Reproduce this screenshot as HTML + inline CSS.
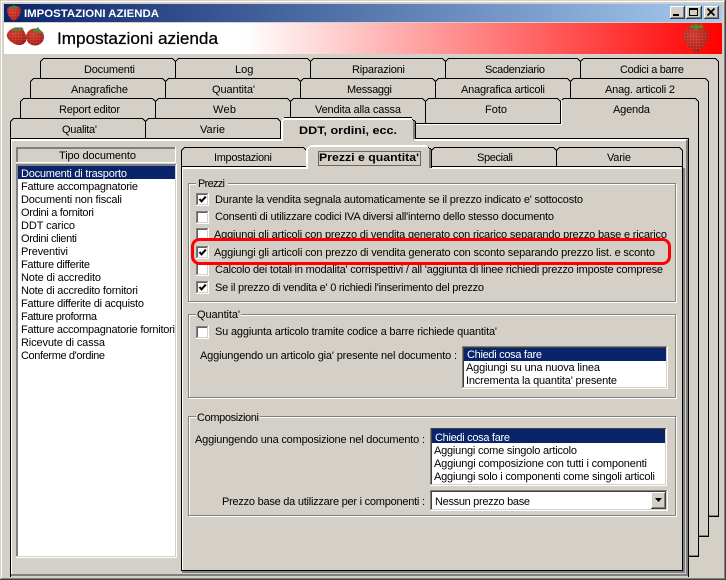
<!DOCTYPE html>
<html><head><meta charset="utf-8"><title>Impostazioni azienda</title>
<style>
html,body{margin:0;padding:0;background:#d4d0c8;width:726px;height:580px;overflow:hidden}
svg{display:block}
text{font-family:"Liberation Sans",Arial,sans-serif;font-size:11px;fill:#000}
.t path{fill:#d4d0c8;stroke:#000;stroke-width:1;shape-rendering:crispEdges}
.c{shape-rendering:crispEdges}
</style></head><body>
<svg width="726" height="580" viewBox="0 0 726 580" xmlns="http://www.w3.org/2000/svg">
<defs>
<linearGradient id="tb" x1="0" x2="1" y1="0" y2="0"><stop offset="0" stop-color="#0a246a"/><stop offset="1" stop-color="#a6caf0"/></linearGradient>
<linearGradient id="hd" gradientUnits="userSpaceOnUse" x1="245" x2="722" y1="0" y2="0"><stop offset="0" stop-color="#fff"/><stop offset="1" stop-color="#f00"/></linearGradient>
<radialGradient id="sb" cx=".4" cy=".35" r=".75"><stop offset="0" stop-color="#d8443a"/><stop offset=".7" stop-color="#b82a20"/><stop offset="1" stop-color="#8a1e16"/></radialGradient>
<pattern id="spk" width="3" height="3" patternUnits="userSpaceOnUse"><rect width="1" height="1" fill="#d86850" opacity=".5"/><rect x="1.500" y="1.500" width="1" height="1" fill="#701810" opacity=".55"/></pattern>
<g id="cb" class="c">
<rect width="13" height="13" fill="#fff"/>
<rect width="12" height="1" fill="#808080"/><rect width="1" height="12" fill="#808080"/>
<rect x="1" y="1" width="10" height="1" fill="#606060"/><rect x="1" y="1" width="1" height="10" fill="#606060"/>
<rect x="1" y="11" width="11" height="1" fill="#d4d0c8"/><rect x="11" y="1" width="1" height="11" fill="#d4d0c8"/>
</g>
<g id="cbk"><use href="#cb"/><path d="M3.500 6L5.500 8.400L9.800 3.600" fill="none" stroke="#000" stroke-width="2"/></g>
</defs>

<!-- window -->
<rect width="726" height="580" fill="#d4d0c8"/>
<g class="c">
<rect x="1" y="1" width="724" height="1" fill="#fff"/><rect x="1" y="1" width="1" height="578" fill="#fff"/>
<rect x="724" y="1" width="1" height="578" fill="#808080"/><rect x="1" y="578" width="724" height="1" fill="#808080"/>
<rect x="725" y="0" width="1" height="580" fill="#404040"/><rect x="0" y="579" width="726" height="1" fill="#404040"/>
<rect x="4" y="4" width="718" height="18" fill="url(#tb)"/>
<rect x="4" y="23" width="718" height="31" fill="url(#hd)"/>
</g>

<!-- title icon -->
<path d="M7 10C7 7 10 6 14 6C18 6 21 7 21 10C21 15 17 20 14 21C11 20 7 15 7 10Z" fill="url(#sb)"/>
<path d="M7 10C7 7 10 6 14 6C18 6 21 7 21 10C21 15 17 20 14 21C11 20 7 15 7 10Z" fill="url(#spk)"/>
<path d="M9 8L12 6.500L14 5L16 6.500L19 8L16 8.500L14 7.500L12 8.500Z" fill="#3f8a38"/>
<text x="24" y="17" font-weight="bold" style="fill:#fff" textLength="135" lengthAdjust="spacingAndGlyphs">IMPOSTAZIONI AZIENDA</text>

<!-- caption buttons -->
<g class="c">
<rect x="670" y="6" width="15" height="13" fill="#404040"/><rect x="670" y="6" width="14" height="12" fill="#fff"/><rect x="671" y="7" width="13" height="11" fill="#808080"/><rect x="671" y="7" width="12" height="10" fill="#d4d0c8"/>
<rect x="673" y="14" width="6" height="2" fill="#000"/>
<rect x="686" y="6" width="16" height="13" fill="#404040"/><rect x="686" y="6" width="15" height="12" fill="#fff"/><rect x="687" y="7" width="14" height="11" fill="#808080"/><rect x="687" y="7" width="13" height="10" fill="#d4d0c8"/>
<rect x="689.500" y="8.500" width="8" height="7" fill="none" stroke="#000"/><rect x="689" y="8" width="9" height="2" fill="#000"/>
<rect x="704" y="6" width="15" height="13" fill="#404040"/><rect x="704" y="6" width="14" height="12" fill="#fff"/><rect x="705" y="7" width="13" height="11" fill="#808080"/><rect x="705" y="7" width="12" height="10" fill="#d4d0c8"/>
</g>
<path d="M707.500 8.500L714.500 15.500M714.500 8.500L707.500 15.500" stroke="#000" stroke-width="1.800" fill="none"/>

<!-- header berries -->
<ellipse cx="35" cy="37" rx="9" ry="8.500" fill="url(#sb)"/><ellipse cx="35" cy="37" rx="9" ry="8.500" fill="url(#spk)"/>
<path d="M7 34C9 29 16 26 21 28C25 30 27 37 26 41C24 46 17 46 13 43C9 41 6 37 7 34Z" fill="url(#sb)"/>
<path d="M7 34C9 29 16 26 21 28C25 30 27 37 26 41C24 46 17 46 13 43C9 41 6 37 7 34Z" fill="url(#spk)"/>
<path d="M12 30L15 27L17 29L21 27L24 29L20 31L15 31ZM32 30L36 29L38 27L40 30L44 33L39 33L35 32Z" fill="#4d8a3a"/>
<text x="57" y="44" style="font-size:16.500px;stroke:#000;stroke-width:.25" textLength="161" lengthAdjust="spacingAndGlyphs">Impostazioni azienda</text>
<path d="M683 33C685 28 691 27 696 27C701 27 707 28 709 33C710 40 703 49 696 53C689 49 682 40 683 33Z" fill="url(#sb)"/>
<path d="M683 33C685 28 691 27 696 27C701 27 707 28 709 33C710 40 703 49 696 53C689 49 682 40 683 33Z" fill="url(#spk)"/>
<path d="M689 28L692 24L694 26L696 23L698 26L701 24L704 28L699 28L696 30L693 28Z" fill="#4f8a32"/>

<!-- ROW 1 -->
<g class="t">
<path d="M40.500 82V61.500L43.500 58.500H172.500L175.500 61.500V82"/>
<path d="M175.500 82V61.500L178.500 58.500H307.500L310.500 61.500V82"/>
<path d="M310.500 82V61.500L313.500 58.500H442.500L445.500 61.500V82"/>
<path d="M445.500 82V61.500L448.500 58.500H577.500L580.500 61.500V82"/>
<path d="M580.500 82V61.500L583.500 58.500H715.500L718.500 61.500V516.500H700V82"/>
</g>
<text x="84" y="73" textLength="51">Documenti</text>
<text x="235" y="73">Log</text>
<text x="352" y="73" textLength="53">Riparazioni</text>
<text x="485" y="73" textLength="60">Scadenziario</text>
<text x="620" y="73" textLength="64">Codici a barre</text>

<!-- ROW 2 -->
<g class="t">
<path d="M30.500 102V81.500L33.500 78.500H162.500L165.500 81.500V102"/>
<path d="M165.500 102V81.500L168.500 78.500H297.500L300.500 81.500V102"/>
<path d="M300.500 102V81.500L303.500 78.500H432.500L435.500 81.500V102"/>
<path d="M435.500 102V81.500L438.500 78.500H567.500L570.500 81.500V102"/>
<path d="M570.500 102V81.500L573.500 78.500H705.500L708.500 81.500V536.500H690V102"/>
</g>
<text x="71" y="93" textLength="57">Anagrafiche</text>
<text x="212" y="93" textLength="43">Quantita'</text>
<text x="347" y="93" textLength="45">Messaggi</text>
<text x="461" y="93" textLength="84">Anagrafica articoli</text>
<text x="605" y="93" textLength="70">Anag. articoli 2</text>

<!-- ROW 3 -->
<g class="t">
<path d="M20.500 123.500V101.500L23.500 98.500H152.500L155.500 101.500V123.500"/>
<path d="M155.500 123.500V101.500L158.500 98.500H287.500L290.500 101.500V123.500"/>
<path d="M290.500 123.500V101.500L293.500 98.500H422.500L425.500 101.500V123.500"/>
<path d="M425.500 123.500V101.500L428.500 98.500H557.500L560.500 101.500V123.500"/>
<path d="M560.500 123.500V101.500L563.500 98.500H695.500L698.500 101.500V556.500H680V150H560.500Z" style="stroke:none"/>
<path d="M560.500 123V101.500L563.500 98.500H695.500L698.500 101.500V556.500H688" style="fill:none"/>
</g>
<g class="c">
<rect x="415" y="123" width="146" height="1" fill="#000"/>
<rect x="415" y="124" width="147" height="1" fill="#fff"/>
<rect x="561" y="100" width="1" height="25" fill="#fff"/>
<rect x="689" y="555" width="9" height="1" fill="#808080"/>
<rect x="699" y="535" width="9" height="1" fill="#808080"/>
<rect x="709" y="515" width="9" height="1" fill="#808080"/>
</g>
<text x="59" y="113" textLength="61">Report editor</text>
<text x="213" y="113" textLength="23">Web</text>
<text x="315" y="113" textLength="86">Vendita alla cassa</text>
<text x="485" y="113">Foto</text>
<text x="613" y="113" textLength="37">Agenda</text>

<!-- ROW 4 inactive -->
<g class="t">
<path d="M10.500 143V121.500L13.500 118.500H142.500L145.500 121.500V143"/>
<path d="M145.500 143V121.500L148.500 118.500H277.500L280.500 121.500V143"/>
</g>

<!-- MAIN PANEL -->
<g class="c">
<rect x="10" y="138" width="679" height="439" fill="#d4d0c8"/>
<rect x="10" y="138" width="678" height="1" fill="#000"/>
<rect x="11" y="139" width="676" height="2" fill="#fff"/>
<rect x="10" y="138" width="1" height="439" fill="#000"/>
<rect x="11" y="139" width="1" height="436" fill="#fff"/>
<rect x="688" y="138" width="1" height="439" fill="#000"/>
<rect x="686" y="140" width="2" height="436" fill="#808080"/>
<rect x="11" y="574" width="677" height="2" fill="#808080"/>
<!-- active DDT tab -->
<rect x="282" y="118" width="133" height="24" fill="#d4d0c8"/>
<rect x="284" y="117" width="128" height="1" fill="#000"/>
<rect x="284" y="118" width="128" height="2" fill="#fff"/>
<rect x="281" y="121" width="2" height="18" fill="#fff"/>
<rect x="282" y="120" width="2" height="1" fill="#fff"/><rect x="283" y="119" width="2" height="1" fill="#fff"/>
<rect x="415" y="121" width="1" height="18" fill="#000"/>
<rect x="413" y="121" width="2" height="18" fill="#808080"/>
<rect x="412" y="119" width="1" height="1" fill="#000"/><rect x="413" y="120" width="2" height="1" fill="#000"/>
<rect x="281" y="139" width="2" height="2" fill="#fff"/>
</g>
<text x="62" y="133" textLength="35">Qualita'</text>
<text x="200" y="133" textLength="25">Varie</text>
<text x="299" y="134" font-weight="bold" textLength="98" lengthAdjust="spacingAndGlyphs">DDT, ordini, ecc.</text>

<!-- left header + list -->
<g class="c">
<rect x="16" y="147" width="160" height="16" fill="#fff"/>
<rect x="16" y="147" width="159" height="2" fill="#808080"/><rect x="16" y="147" width="2" height="15" fill="#808080"/>
<rect x="18" y="149" width="157" height="13" fill="#d4d0c8"/>
<rect x="16" y="164" width="161" height="394" fill="#d4d0c8"/>
<rect x="17" y="165" width="159" height="392" fill="#fff"/>
<rect x="17" y="164" width="159" height="2" fill="#808080"/><rect x="17" y="165" width="1" height="391" fill="#808080"/>
<rect x="16" y="164" width="1" height="393" fill="#808080"/>
<rect x="16" y="556" width="160" height="1" fill="#d4d0c8"/><rect x="175" y="165" width="1" height="391" fill="#d4d0c8"/>
<rect x="16" y="557" width="161" height="1" fill="#fff"/><rect x="176" y="164" width="1" height="393" fill="#fff"/>
<rect x="18" y="166" width="157" height="13" fill="#0a246a"/>
</g>
<text x="59" y="159" textLength="77">Tipo documento</text>
<text x="21" y="177" style="fill:#fff" textLength="106">Documenti di trasporto</text>
<text x="21" y="190" textLength="117">Fatture accompagnatorie</text>
<text x="21" y="203" textLength="101">Documenti non fiscali</text>
<text x="21" y="216" textLength="73">Ordini a fornitori</text>
<text x="21" y="229" textLength="54">DDT carico</text>
<text x="21" y="242" textLength="56">Ordini clienti</text>
<text x="21" y="255" textLength="47">Preventivi</text>
<text x="21" y="268" textLength="69">Fatture differite</text>
<text x="21" y="281" textLength="80">Note di accredito</text>
<text x="21" y="294" textLength="117">Note di accredito fornitori</text>
<text x="21" y="307" textLength="123">Fatture differite di acquisto</text>
<text x="21" y="320" textLength="76">Fatture proforma</text>
<text x="21" y="333" textLength="154">Fatture accompagnatorie fornitori</text>
<text x="21" y="346" textLength="84">Ricevute di cassa</text>
<text x="21" y="359" textLength="84">Conferme d'ordine</text>

<!-- sub tabs -->
<g class="t">
<path d="M181.500 170V150.500L184.500 147.500H303.500L306.500 150.500V170"/>
<path d="M431.500 170V150.500L434.500 147.500H553.500L556.500 150.500V170"/>
<path d="M556.500 170V150.500L559.500 147.500H679.500L682.500 150.500V170"/>
</g>
<!-- sub panel -->
<g class="c">
<rect x="181" y="166" width="502" height="406" fill="#d4d0c8"/>
<rect x="181" y="166" width="502" height="1" fill="#000"/>
<rect x="182" y="167" width="499" height="2" fill="#fff"/>
<rect x="181" y="166" width="1" height="405" fill="#000"/>
<rect x="182" y="167" width="1" height="403" fill="#fff"/>
<rect x="682" y="166" width="1" height="405" fill="#000"/>
<rect x="683" y="168" width="2" height="405" fill="#808080"/>
<rect x="181" y="570" width="502" height="1" fill="#000"/>
<rect x="182" y="571" width="503" height="2" fill="#808080"/>
<!-- active sub tab -->
<rect x="307" y="146" width="124" height="24" fill="#d4d0c8"/>
<rect x="310" y="145" width="117" height="2" fill="#fff"/>
<rect x="306" y="149" width="2" height="20" fill="#fff"/>
<rect x="307" y="148" width="2" height="1" fill="#fff"/><rect x="308" y="147" width="2" height="1" fill="#fff"/>
<rect x="429" y="149" width="2" height="19" fill="#808080"/><rect x="431" y="149" width="1" height="19" fill="#000"/>
<rect x="428" y="147" width="1" height="1" fill="#000"/><rect x="429" y="148" width="2" height="1" fill="#000"/>
<rect x="306" y="167" width="2" height="2" fill="#fff"/>
</g>
<rect x="318.500" y="151.500" width="102" height="14" fill="none" stroke="#000" stroke-dasharray="1 1" class="c"/>
<text x="214" y="161" textLength="58">Impostazioni</text>
<text x="319" y="161" font-weight="bold" textLength="100" lengthAdjust="spacingAndGlyphs">Prezzi e quantita'</text>
<text x="477" y="161" textLength="36">Speciali</text>
<text x="607" y="161" textLength="24">Varie</text>

<!-- group boxes -->
<g fill="none" class="c">
<rect x="189.500" y="184.500" width="487" height="118" stroke="#fff"/>
<rect x="188.500" y="183.500" width="487" height="118" stroke="#808080"/>
<rect x="189.500" y="315.500" width="487" height="83" stroke="#fff"/>
<rect x="188.500" y="314.500" width="487" height="83" stroke="#808080"/>
<rect x="189.500" y="417.500" width="487" height="99" stroke="#fff"/>
<rect x="188.500" y="416.500" width="487" height="99" stroke="#808080"/>
</g>
<g class="c" fill="#d4d0c8">
<rect x="196" y="182" width="32" height="4"/>
<rect x="196" y="313" width="45" height="4"/>
<rect x="196" y="415" width="64" height="4"/>
</g>
<text x="198" y="187" textLength="27">Prezzi</text>
<text x="197" y="318" textLength="43">Quantita'</text>
<text x="197" y="421" textLength="62">Composizioni</text>

<use href="#cbk" x="196" y="193"/>
<use href="#cb" x="196" y="211"/>
<use href="#cb" x="196" y="228"/>
<use href="#cbk" x="196" y="246"/>
<use href="#cb" x="196" y="263"/>
<use href="#cbk" x="196" y="281"/>
<text x="215" y="203" textLength="368">Durante la vendita segnala automaticamente se il prezzo indicato e' sottocosto</text>
<text x="215" y="220" textLength="339">Consenti di utilizzare codici IVA diversi all'interno dello stesso documento</text>
<text x="214" y="238" textLength="453">Aggiungi gli articoli con prezzo di vendita generato con ricarico separando prezzo base e ricarico</text>
<text x="214" y="256" textLength="441">Aggiungi gli articoli con prezzo di vendita generato con sconto separando prezzo list. e sconto</text>
<text x="215" y="273" textLength="448">Calcolo dei totali in modalita' corrispettivi / all 'aggiunta di linee richiedi prezzo imposte comprese</text>
<text x="215" y="291" textLength="269">Se il prezzo di vendita e' 0 richiedi l'inserimento del prezzo</text>

<!-- red annotation -->
<rect x="192.500" y="239.500" width="477" height="24" rx="7" ry="7" fill="none" stroke="#f00" stroke-width="3"/>

<!-- Quantita -->
<use href="#cb" x="196" y="326"/>
<text x="215" y="335" textLength="282">Su aggiunta articolo tramite codice a barre richiede quantita'</text>
<text x="200" y="359" textLength="257">Aggiungendo un articolo gia' presente nel documento :</text>
<g class="c">
<rect x="462" y="346" width="206" height="43" fill="#fff"/>
<rect x="462" y="346" width="205" height="1" fill="#808080"/><rect x="462" y="346" width="1" height="42" fill="#808080"/>
<rect x="463" y="347" width="204" height="1" fill="#404040"/><rect x="463" y="347" width="1" height="40" fill="#404040"/>
<rect x="463" y="387" width="204" height="1" fill="#d4d0c8"/><rect x="666" y="347" width="1" height="41" fill="#d4d0c8"/>
<rect x="464" y="348" width="202" height="13" fill="#0a246a"/>
</g>
<text x="467" y="358" style="fill:#fff" textLength="75">Chiedi cosa fare</text>
<text x="466" y="371" textLength="134">Aggiungi su una nuova linea</text>
<text x="466" y="384" textLength="151">Incrementa la quantita' presente</text>

<!-- Composizioni -->
<text x="195" y="443" textLength="230">Aggiungendo una composizione nel documento :</text>
<g class="c">
<rect x="430" y="428" width="237" height="58" fill="#fff"/>
<rect x="430" y="428" width="236" height="1" fill="#808080"/><rect x="430" y="428" width="1" height="57" fill="#808080"/>
<rect x="431" y="428" width="235" height="1" fill="#404040"/><rect x="431" y="429" width="1" height="55" fill="#404040"/>
<rect x="431" y="484" width="235" height="1" fill="#d4d0c8"/><rect x="665" y="429" width="1" height="56" fill="#d4d0c8"/>
<rect x="432" y="429" width="233" height="14" fill="#0a246a"/>
</g>
<text x="435" y="441" style="fill:#fff" textLength="75">Chiedi cosa fare</text>
<text x="434" y="454" textLength="143">Aggiungi come singolo articolo</text>
<text x="434" y="467" textLength="213">Aggiungi composizione con tutti i componenti</text>
<text x="434" y="480" textLength="221">Aggiungi solo i componenti come singoli articoli</text>

<text x="222" y="505" textLength="203">Prezzo base da utilizzare per i componenti :</text>
<g class="c">
<rect x="430" y="490" width="238" height="21" fill="#fff"/>
<rect x="430" y="490" width="237" height="1" fill="#808080"/><rect x="430" y="490" width="1" height="20" fill="#808080"/>
<rect x="431" y="491" width="236" height="1" fill="#404040"/><rect x="431" y="491" width="1" height="18" fill="#404040"/>
<rect x="431" y="509" width="236" height="1" fill="#d4d0c8"/><rect x="666" y="491" width="1" height="19" fill="#d4d0c8"/>
<rect x="651" y="492" width="15" height="17" fill="#404040"/><rect x="651" y="492" width="14" height="16" fill="#fff"/>
<rect x="652" y="493" width="13" height="15" fill="#808080"/><rect x="652" y="493" width="12" height="14" fill="#d4d0c8"/>
</g>
<path d="M655 498H662L658.500 502Z" fill="#000"/>
<text x="435" y="505" textLength="95">Nessun prezzo base</text>
</svg>
</body></html>
